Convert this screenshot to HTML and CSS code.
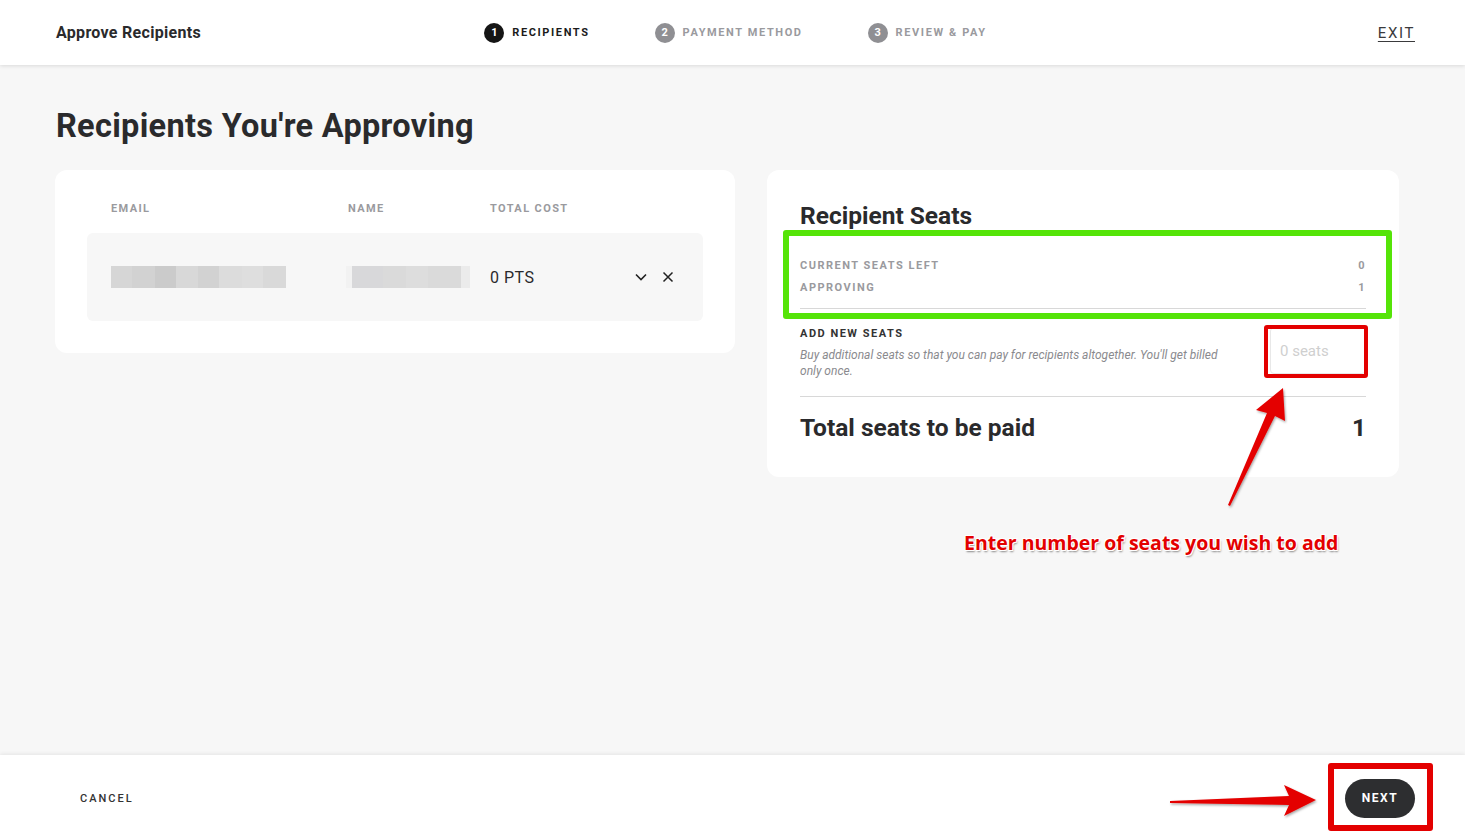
FILE: index.html
```html
<!DOCTYPE html>
<html lang="en">
<head>
    <meta charset="UTF-8">
    <meta name="viewport" content="width=device-width, initial-scale=1.0">
    <title>Approve Recipients</title>
    <link rel="stylesheet" href="styles.css">
</head>
<body>
    <div class="page">
        <header class="top-bar">
            <div class="top-title">Approve Recipients</div>
            <nav class="steps">
                <div class="step active"><span class="step-num">1</span>RECIPIENTS</div>
                <div class="step"><span class="step-num">2</span>PAYMENT METHOD</div>
                <div class="step"><span class="step-num">3</span>REVIEW &amp; PAY</div>
            </nav>
            <div class="top-exit"><a href="#">EXIT</a></div>
        </header>

        <main class="content">
            <h1>Recipients You're Approving</h1>

            <div class="cards">
                <section class="card recipients-card">
                    <div class="table-head">
                        <span>EMAIL</span>
                        <span>NAME</span>
                        <span>TOTAL COST</span>
                    </div>
                    <div class="table-row">
                        <span class="blur blur-email"></span>
                        <span class="blur blur-name"></span>
                        <span class="cost">0 PTS</span>
                        <span class="row-actions">
                            <svg width="14" height="14" viewBox="0 0 14 14"><path d="M2 4.5 L7 9.5 L12 4.5" fill="none" stroke="#222" stroke-width="1.6"/></svg>
                            <svg width="12" height="12" viewBox="0 0 12 12"><path d="M1.5 1.5 L10.5 10.5 M10.5 1.5 L1.5 10.5" fill="none" stroke="#222" stroke-width="1.5"/></svg>
                        </span>
                    </div>
                </section>

                <section class="card seats-card">
                    <h2>Recipient Seats</h2>
                    <div class="seat-summary">
                        <div class="seat-line"><span>CURRENT SEATS LEFT</span><span>0</span></div>
                        <div class="seat-line"><span>APPROVING</span><span>1</span></div>
                    </div>
                    <div class="add-seats">
                        <div class="add-text">
                            <div class="add-label">ADD NEW SEATS</div>
                            <p>Buy additional seats so that you can pay for recipients altogether. You'll get billed only once.</p>
                        </div>
                        <input class="seat-input" type="text" placeholder="0 seats">
                    </div>
                    <div class="seat-total"><span>Total seats to be paid</span><span>1</span></div>
                </section>
            </div>
        </main>

        <footer class="bottom-bar">
            <a href="#" class="cancel">CANCEL</a>
            <button class="next-btn">NEXT</button>
        </footer>

        <!-- annotations drawn over the screenshot -->
        <div class="mark mark-green"></div>
        <div class="mark mark-input"></div>
        <div class="mark mark-next"></div>
        <div class="note">Enter number of seats you wish to add</div>
        <svg class="arrows" width="1465" height="835" viewBox="0 0 1465 835">
            <defs>
                <filter id="sh" x="-20%" y="-20%" width="140%" height="140%">
                    <feDropShadow dx="1" dy="1.5" stdDeviation="1.2" flood-color="#000" flood-opacity="0.35"/>
                </filter>
            </defs>
            <path filter="url(#sh)" fill="#e40000" d="M1228 505 L1267 413 L1256 410 L1283 388 L1285 421 L1275 416 L1230 506 Z"/>
            <path filter="url(#sh)" fill="#e40000" d="M1170 801 L1289 796 L1284 785 L1316 800 L1284 816 L1289 805 L1170 803 Z"/>
        </svg>
    </div>
</body>
</html>
```

FILE: styles.css
```css
:root {
    --text-dark: #2a2a2c;
    --text-muted: #9a9a9e;
    --page-bg: #f7f7f7;
    --mark-red: #e30000;
    --mark-green: #55e408;
}

* {
    box-sizing: border-box;
}

body {
    margin: 0;
    font-family: Roboto, "Liberation Sans", Arial, sans-serif;
    color: var(--text-dark);
    background: var(--page-bg);
}

.page {
    position: relative;
    display: flex;
    flex-direction: column;
    height: 100vh;
    overflow: hidden;
}

/* top bar */
.top-bar {
    display: grid;
    grid-template-columns: 1fr auto 1fr;
    align-items: center;
    height: 65px;
    padding: 0 50px 0 56px;
    background: white;
    box-shadow: 0 1px 4px rgba(0, 0, 0, 0.12);
    z-index: 1;
}

.top-title {
    font-size: 16px;
    font-weight: 700;
    letter-spacing: 0.3px;
}

.steps {
    display: flex;
    gap: 65px;
}

.step {
    display: flex;
    align-items: center;
    gap: 8px;
    font-size: 11px;
    font-weight: 700;
    letter-spacing: 1.6px;
    color: var(--text-muted);
}

.step.active {
    color: #1b1b1b;
}

.step-num {
    display: flex;
    align-items: center;
    justify-content: center;
    width: 20px;
    height: 20px;
    border-radius: 50%;
    background: #8f8f93;
    color: white;
    font-size: 11px;
    letter-spacing: 0;
}

.step.active .step-num {
    background: #151515;
}

.top-exit {
    text-align: right;
}

.top-exit a {
    font-size: 15px;
    letter-spacing: 1.6px;
    color: #3a3a3c;
    text-decoration: underline;
    text-underline-offset: 3px;
}

/* main content */
.content {
    flex: 1;
    padding: 0 66px 0 55px;
}

h1 {
    margin: 40px 0 0 1px;
    font-size: 32.5px;
    line-height: 42px;
    font-weight: 700;
    letter-spacing: 0.3px;
}

.cards {
    display: flex;
    align-items: flex-start;
    gap: 32px;
    margin-top: 23px;
}

.card {
    background: white;
    border-radius: 12px;
}

.recipients-card {
    width: 680px;
    padding: 0 32px 32px;
}

.table-head {
    display: grid;
    grid-template-columns: 237px 142px 1fr;
    align-items: center;
    height: 63px;
    padding: 26px 0 12px 24px;
    font-size: 11px;
    font-weight: 700;
    letter-spacing: 1.4px;
    color: var(--text-muted);
}

.table-row {
    display: grid;
    grid-template-columns: 237px 142px 1fr auto;
    align-items: center;
    height: 88px;
    padding: 0 29px 0 24px;
    background: var(--page-bg);
    border-radius: 6px;
}

.blur {
    display: block;
    height: 22px;
}

.blur-email {
    width: 175px;
    background: linear-gradient(90deg, #d6d6d6 0 12%, #d2d2d2 12% 25%, #cbcbcb 25% 37%, #d8d8d8 37% 50%, #d2d2d2 50% 62%, #dcdcdc 62% 75%, #dedede 75% 87%, #d9d9d9 87%);
}

.blur-name {
    width: 124px;
    margin-left: -2px;
    background: linear-gradient(90deg, #f2f2f2 0 5%, #d8d8da 5% 30%, #dadada 30% 48%, #dddddd 48% 66%, #dadada 66% 93%, #ebebeb 93%);
}

.cost {
    font-size: 16px;
    letter-spacing: 0.5px;
}

.row-actions {
    display: flex;
    align-items: center;
    gap: 14px;
}

.seats-card {
    width: 632px;
    padding: 31px 33px 0;
}

h2 {
    margin: 0;
    font-size: 24.5px;
    line-height: 30px;
    font-weight: 700;
}

.seat-summary {
    padding: 24px 0 9px;
    border-bottom: 1px solid #d8d8d8;
}

.seat-line {
    display: flex;
    justify-content: space-between;
    line-height: 22px;
    font-size: 11px;
    font-weight: 700;
    letter-spacing: 1.5px;
    color: var(--text-muted);
}

.add-seats {
    display: flex;
    justify-content: space-between;
    align-items: flex-start;
    padding: 18px 0 17px;
    border-bottom: 1px solid #d8d8d8;
}

.add-label {
    font-size: 11px;
    font-weight: 700;
    letter-spacing: 1.5px;
    color: #333;
}

.add-text p {
    width: 432px;
    margin: 7px 0 0;
    font-size: 12px;
    line-height: 16px;
    font-style: italic;
    color: #8a8a8e;
}

.seat-input {
    width: 96px;
    height: 47px;
    padding: 0 9px;
    border: 1px solid #e8e8e8;
    border-radius: 4px;
    font-family: inherit;
    font-size: 15px;
    color: var(--text-dark);
}

.seat-input::placeholder {
    color: #cfcfcf;
}

.seat-total {
    display: flex;
    justify-content: space-between;
    padding: 16px 0 34px;
    font-size: 24.5px;
    line-height: 30px;
    font-weight: 700;
}

/* bottom bar */
.bottom-bar {
    display: flex;
    justify-content: space-between;
    align-items: center;
    height: 80px;
    padding: 6px 50px 0 80px;
    background: white;
    box-shadow: 0 -1px 4px rgba(0, 0, 0, 0.08);
}

.cancel {
    font-size: 11px;
    font-weight: 500;
    letter-spacing: 2px;
    color: #333;
    text-decoration: none;
}

.next-btn {
    width: 70px;
    height: 39px;
    border: none;
    border-radius: 20px;
    background: #2d2e30;
    color: white;
    font-family: inherit;
    font-size: 12px;
    font-weight: 700;
    letter-spacing: 1.5px;
    cursor: pointer;
}

/* annotations */
.mark {
    position: absolute;
    border-radius: 3px;
}

.mark-green {
    left: 783px;
    top: 230px;
    width: 609px;
    height: 89px;
    border: 6px solid var(--mark-green);
}

.mark-input {
    left: 1264px;
    top: 325px;
    width: 104px;
    height: 53px;
    border: 4px solid var(--mark-red);
}

.mark-next {
    left: 1328px;
    top: 763px;
    width: 105px;
    height: 68px;
    border: 6px solid var(--mark-red);
}

.note {
    position: absolute;
    left: 964px;
    top: 529px;
    font-family: "Open Sans", sans-serif;
    font-size: 19.5px;
    font-weight: 700;
    color: var(--mark-red);
    text-shadow: -1px -1px 0 #fff, 1px -1px 0 #fff, -1px 1px 0 #fff, 1px 1px 0 #fff, 1px 2px 2px rgba(0, 0, 0, 0.45);
}

.arrows {
    position: absolute;
    left: 0;
    top: 0;
    pointer-events: none;
}
```
